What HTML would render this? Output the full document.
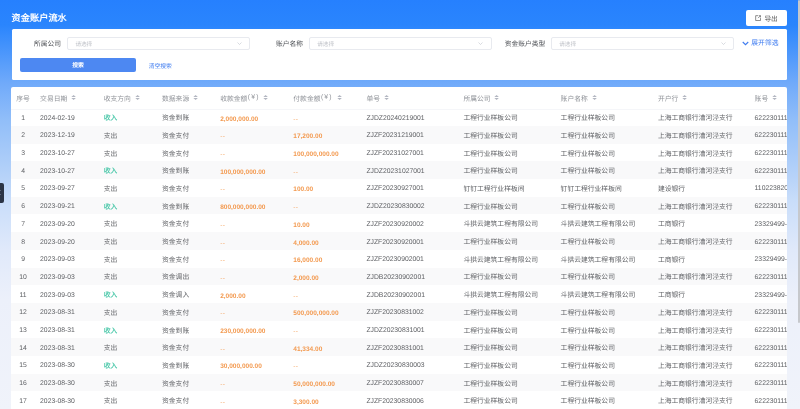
<!DOCTYPE html>
<html lang="zh-CN"><head><meta charset="utf-8">
<style>
*{margin:0;padding:0;box-sizing:border-box}
html,body{width:800px;height:409px;overflow:hidden}
.page{position:absolute;left:0;top:0;width:800px;height:409px;overflow:hidden;will-change:transform;background:inherit;filter:blur(0.3px)}
body{font-family:"Liberation Sans",sans-serif;position:relative;-webkit-font-smoothing:antialiased;text-rendering:geometricPrecision;
background:linear-gradient(180deg,rgb(38,128,254) 0px,rgb(42,133,253) 25px,rgb(112,170,250) 83px,rgb(145,190,249) 120px,rgb(185,212,249) 180px,rgb(200,221,250) 200px,rgb(224,233,250) 250px,rgb(236,240,250) 300px,rgb(240,243,250) 409px);}
.title{position:absolute;left:11.5px;top:13.2px;font-size:9.15px;line-height:11px;color:#fff;font-weight:bold;letter-spacing:0.1px}
.export{position:absolute;left:745.8px;top:10.3px;width:40.9px;height:15.4px;background:#fff;border-radius:2px;font-size:6.7px;line-height:15.4px;color:#333}
.export svg{position:absolute;left:9.2px;top:4.8px}
.export span{position:absolute;left:18.6px;top:1.3px;color:#555}
.fcard{position:absolute;left:12px;top:29.4px;width:774.5px;height:50.4px;background:#fff;border-radius:1.5px}
.lbl{position:absolute;font-size:6.75px;line-height:8px;color:#4a4d52;white-space:nowrap}
.inp{position:absolute;height:12.9px;border:0.6px solid #e8eaef;border-radius:2px;background:#fff}
.inp .ph{position:absolute;left:7px;top:4px;font-size:5.6px;line-height:7px;color:#c0c3c9;white-space:nowrap}
.inp .chev{position:absolute;right:7.6px;top:4.3px}
.btn{position:absolute;left:7.8px;top:28.3px;width:116.4px;height:14px;background:#4d88f2;border-radius:2px;color:#fff;font-size:5.8px;line-height:14px;padding-top:1.6px;text-align:center;font-weight:bold}
.link{position:absolute;color:#3f7cf0;font-size:5.8px;line-height:8px;white-space:nowrap}
.tcard{position:absolute;left:11px;top:87px;width:775.6px;height:330px;background:#fff;border-radius:2px;overflow:hidden}
.hdr,.row{position:absolute;left:0;width:100%}
.hdr{border-bottom:1px solid #f5f6f9}
.hdr .c{height:21.3px}
.row.even{background:#f9f9fa}
.c{position:absolute;top:0;height:100%;display:flex;align-items:center;font-size:6.8px;color:#606266;white-space:nowrap}
.hdr .c{color:#909399}
.c.idx{left:0;width:24.2px;justify-content:center}
.green{color:#3cc3a2;font-weight:normal;-webkit-text-stroke:0.12px #3cc3a2}
.n{top:1px!important}
.c.dash{font-weight:normal;letter-spacing:0.3px;color:#f5a766;font-size:6.67px;top:1px!important}
.yen{letter-spacing:1.2px;margin-left:0.4px}
.orange{color:#f39a50;font-weight:bold;font-size:6.52px}
.c.orange.n{top:2px!important}
.si{margin-left:3.8px}
.tab{position:absolute;left:0;top:183.3px;width:4.3px;height:19.4px;background:#2b3445;border-radius:0 2px 2px 0}
.tab i{position:absolute;left:0;width:1px;height:0.8px;background:#5d6678}
.sb{position:absolute;left:798px;top:0;width:2px;height:323px;background:#c6c8cc;border-radius:1px}
</style></head><body><div class="page">
<div class="title">资金账户流水</div>
<div class="export"><svg viewBox="0 0 14 14" width="6.2" height="6.2"><path d="M7 1.5H1.5V12.5H12.5V7M8.5 1.5H12.5V5.5M12.5 1.5L7 7" fill="none" stroke="#555" stroke-width="1.5"/></svg><span>导出</span></div>
<div class="fcard">
  <div class="lbl" style="left:22.1px;top:12px">所属公司</div>
  <div class="inp" style="left:55.4px;top:7.5px;width:182.8px"><span class="ph">请选择</span><svg class="chev" viewBox="0 0 10 6" width="5" height="3"><path d="M1 1L5 5L9 1" fill="none" stroke="#c0c4cc" stroke-width="1.2"/></svg></div>
  <div class="lbl" style="left:263.9px;top:12px">账户名称</div>
  <div class="inp" style="left:297.2px;top:7.5px;width:182.4px"><span class="ph">请选择</span><svg class="chev" viewBox="0 0 10 6" width="5" height="3"><path d="M1 1L5 5L9 1" fill="none" stroke="#c0c4cc" stroke-width="1.2"/></svg></div>
  <div class="lbl" style="left:492.7px;top:12px">资金账户类型</div>
  <div class="inp" style="left:539.2px;top:7.5px;width:183.2px"><span class="ph">请选择</span><svg class="chev" viewBox="0 0 10 6" width="5" height="3"><path d="M1 1L5 5L9 1" fill="none" stroke="#c0c4cc" stroke-width="1.2"/></svg></div>
  <svg style="position:absolute;left:729.6px;top:11.4px" viewBox="0 0 14 10" width="7" height="5"><path d="M1.5 2L7 7.5L12.5 2" fill="none" stroke="#3f7cf0" stroke-width="2.2"/></svg>
  <div class="link" style="left:739.3px;top:11px;font-size:6.8px">展开筛选</div>
  <div class="btn">搜索</div>
  <div class="link" style="left:136.7px;top:33.3px">清空搜索</div>
</div>
<div class="tcard">
<div class="hdr" style="top:0;height:22.50px"><span class="c idx">序号</span><span class="c" style="left:29.10px">交易日期<svg class="si" viewBox="0 0 10 10" width="5.2" height="5"><path d="M0.5 4.2L5 0.2L9.5 4.2Z M0.5 5.8L5 9.8L9.5 5.8Z" fill="#b2b6c0"/></svg></span><span class="c" style="left:92.70px">收支方向<svg class="si" viewBox="0 0 10 10" width="5.2" height="5"><path d="M0.5 4.2L5 0.2L9.5 4.2Z M0.5 5.8L5 9.8L9.5 5.8Z" fill="#b2b6c0"/></svg></span><span class="c" style="left:151.00px">数据来源<svg class="si" viewBox="0 0 10 10" width="5.2" height="5"><path d="M0.5 4.2L5 0.2L9.5 4.2Z M0.5 5.8L5 9.8L9.5 5.8Z" fill="#b2b6c0"/></svg></span><span class="c" style="left:209.20px">收款金额<span class="yen">(¥)</span><svg class="si" viewBox="0 0 10 10" width="5.2" height="5"><path d="M0.5 4.2L5 0.2L9.5 4.2Z M0.5 5.8L5 9.8L9.5 5.8Z" fill="#b2b6c0"/></svg></span><span class="c" style="left:282.30px">付款金额<span class="yen">(¥)</span><svg class="si" viewBox="0 0 10 10" width="5.2" height="5"><path d="M0.5 4.2L5 0.2L9.5 4.2Z M0.5 5.8L5 9.8L9.5 5.8Z" fill="#b2b6c0"/></svg></span><span class="c" style="left:355.40px">单号<svg class="si" viewBox="0 0 10 10" width="5.2" height="5"><path d="M0.5 4.2L5 0.2L9.5 4.2Z M0.5 5.8L5 9.8L9.5 5.8Z" fill="#b2b6c0"/></svg></span><span class="c" style="left:452.40px">所属公司<svg class="si" viewBox="0 0 10 10" width="5.2" height="5"><path d="M0.5 4.2L5 0.2L9.5 4.2Z M0.5 5.8L5 9.8L9.5 5.8Z" fill="#b2b6c0"/></svg></span><span class="c" style="left:549.60px">账户名称<svg class="si" viewBox="0 0 10 10" width="5.2" height="5"><path d="M0.5 4.2L5 0.2L9.5 4.2Z M0.5 5.8L5 9.8L9.5 5.8Z" fill="#b2b6c0"/></svg></span><span class="c" style="left:646.90px">开户行<svg class="si" viewBox="0 0 10 10" width="5.2" height="5"><path d="M0.5 4.2L5 0.2L9.5 4.2Z M0.5 5.8L5 9.8L9.5 5.8Z" fill="#b2b6c0"/></svg></span><span class="c" style="left:743.60px">账号<svg class="si" viewBox="0 0 10 10" width="5.2" height="5"><path d="M0.5 4.2L5 0.2L9.5 4.2Z M0.5 5.8L5 9.8L9.5 5.8Z" fill="#b2b6c0"/></svg></span></div>
<div class="row" style="top:21.300px;height:17.7px"><span class="c idx n">1</span><span class="c  n" style="left:29.10px">2024-02-19</span><span class="c green" style="left:92.70px">收入</span><span class="c " style="left:151.00px">资金到账</span><span class="c orange n" style="left:209.20px">2,000,000.00</span><span class="c orange dash n" style="left:282.30px">--</span><span class="c  n" style="left:355.40px">ZJDZ20240219001</span><span class="c " style="left:452.40px">工程行业样板公司</span><span class="c " style="left:549.60px">工程行业样板公司</span><span class="c " style="left:646.90px">上海工商银行漕河泾支行</span><span class="c  n" style="left:743.60px">6222301111111111</span></div>
<div class="row even" style="top:39.000px;height:17.7px"><span class="c idx n">2</span><span class="c  n" style="left:29.10px">2023-12-19</span><span class="c " style="left:92.70px">支出</span><span class="c " style="left:151.00px">资金支付</span><span class="c orange dash n" style="left:209.20px">--</span><span class="c orange n" style="left:282.30px">17,200.00</span><span class="c  n" style="left:355.40px">ZJZF20231219001</span><span class="c " style="left:452.40px">工程行业样板公司</span><span class="c " style="left:549.60px">工程行业样板公司</span><span class="c " style="left:646.90px">上海工商银行漕河泾支行</span><span class="c  n" style="left:743.60px">6222301111111111</span></div>
<div class="row" style="top:56.700px;height:17.7px"><span class="c idx n">3</span><span class="c  n" style="left:29.10px">2023-10-27</span><span class="c " style="left:92.70px">支出</span><span class="c " style="left:151.00px">资金支付</span><span class="c orange dash n" style="left:209.20px">--</span><span class="c orange n" style="left:282.30px">100,000,000.00</span><span class="c  n" style="left:355.40px">ZJZF20231027001</span><span class="c " style="left:452.40px">工程行业样板公司</span><span class="c " style="left:549.60px">工程行业样板公司</span><span class="c " style="left:646.90px">上海工商银行漕河泾支行</span><span class="c  n" style="left:743.60px">6222301111111111</span></div>
<div class="row even" style="top:74.400px;height:17.7px"><span class="c idx n">4</span><span class="c  n" style="left:29.10px">2023-10-27</span><span class="c green" style="left:92.70px">收入</span><span class="c " style="left:151.00px">资金到账</span><span class="c orange n" style="left:209.20px">100,000,000.00</span><span class="c orange dash n" style="left:282.30px">--</span><span class="c  n" style="left:355.40px">ZJDZ20231027001</span><span class="c " style="left:452.40px">工程行业样板公司</span><span class="c " style="left:549.60px">工程行业样板公司</span><span class="c " style="left:646.90px">上海工商银行漕河泾支行</span><span class="c  n" style="left:743.60px">6222301111111111</span></div>
<div class="row" style="top:92.100px;height:17.7px"><span class="c idx n">5</span><span class="c  n" style="left:29.10px">2023-09-27</span><span class="c " style="left:92.70px">支出</span><span class="c " style="left:151.00px">资金支付</span><span class="c orange dash n" style="left:209.20px">--</span><span class="c orange n" style="left:282.30px">100.00</span><span class="c  n" style="left:355.40px">ZJZF20230927001</span><span class="c " style="left:452.40px">钉钉工程行业样板间</span><span class="c " style="left:549.60px">钉钉工程行业样板间</span><span class="c " style="left:646.90px">建设银行</span><span class="c  n" style="left:743.60px">1102238200000</span></div>
<div class="row even" style="top:109.800px;height:17.7px"><span class="c idx n">6</span><span class="c  n" style="left:29.10px">2023-09-21</span><span class="c green" style="left:92.70px">收入</span><span class="c " style="left:151.00px">资金到账</span><span class="c orange n" style="left:209.20px">800,000,000.00</span><span class="c orange dash n" style="left:282.30px">--</span><span class="c  n" style="left:355.40px">ZJDZ20230830002</span><span class="c " style="left:452.40px">工程行业样板公司</span><span class="c " style="left:549.60px">工程行业样板公司</span><span class="c " style="left:646.90px">上海工商银行漕河泾支行</span><span class="c  n" style="left:743.60px">6222301111111111</span></div>
<div class="row" style="top:127.500px;height:17.7px"><span class="c idx n">7</span><span class="c  n" style="left:29.10px">2023-09-20</span><span class="c " style="left:92.70px">支出</span><span class="c " style="left:151.00px">资金支付</span><span class="c orange dash n" style="left:209.20px">--</span><span class="c orange n" style="left:282.30px">10.00</span><span class="c  n" style="left:355.40px">ZJZF20230920002</span><span class="c " style="left:452.40px">斗拱云建筑工程有限公司</span><span class="c " style="left:549.60px">斗拱云建筑工程有限公司</span><span class="c " style="left:646.90px">工商银行</span><span class="c  n" style="left:743.60px">23329499-0000</span></div>
<div class="row even" style="top:145.200px;height:17.7px"><span class="c idx n">8</span><span class="c  n" style="left:29.10px">2023-09-20</span><span class="c " style="left:92.70px">支出</span><span class="c " style="left:151.00px">资金支付</span><span class="c orange dash n" style="left:209.20px">--</span><span class="c orange n" style="left:282.30px">4,000.00</span><span class="c  n" style="left:355.40px">ZJZF20230920001</span><span class="c " style="left:452.40px">工程行业样板公司</span><span class="c " style="left:549.60px">工程行业样板公司</span><span class="c " style="left:646.90px">上海工商银行漕河泾支行</span><span class="c  n" style="left:743.60px">6222301111111111</span></div>
<div class="row" style="top:162.900px;height:17.7px"><span class="c idx n">9</span><span class="c  n" style="left:29.10px">2023-09-03</span><span class="c " style="left:92.70px">支出</span><span class="c " style="left:151.00px">资金支付</span><span class="c orange dash n" style="left:209.20px">--</span><span class="c orange n" style="left:282.30px">16,000.00</span><span class="c  n" style="left:355.40px">ZJZF20230902001</span><span class="c " style="left:452.40px">斗拱云建筑工程有限公司</span><span class="c " style="left:549.60px">斗拱云建筑工程有限公司</span><span class="c " style="left:646.90px">工商银行</span><span class="c  n" style="left:743.60px">23329499-0000</span></div>
<div class="row even" style="top:180.600px;height:17.7px"><span class="c idx n">10</span><span class="c  n" style="left:29.10px">2023-09-03</span><span class="c " style="left:92.70px">支出</span><span class="c " style="left:151.00px">资金调出</span><span class="c orange dash n" style="left:209.20px">--</span><span class="c orange n" style="left:282.30px">2,000.00</span><span class="c  n" style="left:355.40px">ZJDB20230902001</span><span class="c " style="left:452.40px">工程行业样板公司</span><span class="c " style="left:549.60px">工程行业样板公司</span><span class="c " style="left:646.90px">上海工商银行漕河泾支行</span><span class="c  n" style="left:743.60px">6222301111111111</span></div>
<div class="row" style="top:198.300px;height:17.7px"><span class="c idx n">11</span><span class="c  n" style="left:29.10px">2023-09-03</span><span class="c green" style="left:92.70px">收入</span><span class="c " style="left:151.00px">资金调入</span><span class="c orange n" style="left:209.20px">2,000.00</span><span class="c orange dash n" style="left:282.30px">--</span><span class="c  n" style="left:355.40px">ZJDB20230902001</span><span class="c " style="left:452.40px">斗拱云建筑工程有限公司</span><span class="c " style="left:549.60px">斗拱云建筑工程有限公司</span><span class="c " style="left:646.90px">工商银行</span><span class="c  n" style="left:743.60px">23329499-0000</span></div>
<div class="row even" style="top:216.000px;height:17.7px"><span class="c idx n">12</span><span class="c  n" style="left:29.10px">2023-08-31</span><span class="c " style="left:92.70px">支出</span><span class="c " style="left:151.00px">资金支付</span><span class="c orange dash n" style="left:209.20px">--</span><span class="c orange n" style="left:282.30px">500,000,000.00</span><span class="c  n" style="left:355.40px">ZJZF20230831002</span><span class="c " style="left:452.40px">工程行业样板公司</span><span class="c " style="left:549.60px">工程行业样板公司</span><span class="c " style="left:646.90px">上海工商银行漕河泾支行</span><span class="c  n" style="left:743.60px">6222301111111111</span></div>
<div class="row" style="top:233.700px;height:17.7px"><span class="c idx n">13</span><span class="c  n" style="left:29.10px">2023-08-31</span><span class="c green" style="left:92.70px">收入</span><span class="c " style="left:151.00px">资金到账</span><span class="c orange n" style="left:209.20px">230,000,000.00</span><span class="c orange dash n" style="left:282.30px">--</span><span class="c  n" style="left:355.40px">ZJDZ20230831001</span><span class="c " style="left:452.40px">工程行业样板公司</span><span class="c " style="left:549.60px">工程行业样板公司</span><span class="c " style="left:646.90px">上海工商银行漕河泾支行</span><span class="c  n" style="left:743.60px">6222301111111111</span></div>
<div class="row even" style="top:251.400px;height:17.7px"><span class="c idx n">14</span><span class="c  n" style="left:29.10px">2023-08-31</span><span class="c " style="left:92.70px">支出</span><span class="c " style="left:151.00px">资金支付</span><span class="c orange dash n" style="left:209.20px">--</span><span class="c orange n" style="left:282.30px">41,334.00</span><span class="c  n" style="left:355.40px">ZJZF20230831001</span><span class="c " style="left:452.40px">工程行业样板公司</span><span class="c " style="left:549.60px">工程行业样板公司</span><span class="c " style="left:646.90px">上海工商银行漕河泾支行</span><span class="c  n" style="left:743.60px">6222301111111111</span></div>
<div class="row" style="top:269.100px;height:17.7px"><span class="c idx n">15</span><span class="c  n" style="left:29.10px">2023-08-30</span><span class="c green" style="left:92.70px">收入</span><span class="c " style="left:151.00px">资金到账</span><span class="c orange n" style="left:209.20px">30,000,000.00</span><span class="c orange dash n" style="left:282.30px">--</span><span class="c  n" style="left:355.40px">ZJDZ20230830003</span><span class="c " style="left:452.40px">工程行业样板公司</span><span class="c " style="left:549.60px">工程行业样板公司</span><span class="c " style="left:646.90px">上海工商银行漕河泾支行</span><span class="c  n" style="left:743.60px">6222301111111111</span></div>
<div class="row even" style="top:286.800px;height:17.7px"><span class="c idx n">16</span><span class="c  n" style="left:29.10px">2023-08-30</span><span class="c " style="left:92.70px">支出</span><span class="c " style="left:151.00px">资金支付</span><span class="c orange dash n" style="left:209.20px">--</span><span class="c orange n" style="left:282.30px">50,000,000.00</span><span class="c  n" style="left:355.40px">ZJZF20230830007</span><span class="c " style="left:452.40px">工程行业样板公司</span><span class="c " style="left:549.60px">工程行业样板公司</span><span class="c " style="left:646.90px">上海工商银行漕河泾支行</span><span class="c  n" style="left:743.60px">6222301111111111</span></div>
<div class="row" style="top:304.500px;height:17.7px"><span class="c idx n">17</span><span class="c  n" style="left:29.10px">2023-08-30</span><span class="c " style="left:92.70px">支出</span><span class="c " style="left:151.00px">资金支付</span><span class="c orange dash n" style="left:209.20px">--</span><span class="c orange n" style="left:282.30px">3,300.00</span><span class="c  n" style="left:355.40px">ZJZF20230830006</span><span class="c " style="left:452.40px">工程行业样板公司</span><span class="c " style="left:549.60px">工程行业样板公司</span><span class="c " style="left:646.90px">上海工商银行漕河泾支行</span><span class="c  n" style="left:743.60px">6222301111111111</span></div>
</div>
<div class="tab"><i style="top:7px"></i><i style="top:11px"></i></div>
<div class="sb"></div>
</div></body></html>
